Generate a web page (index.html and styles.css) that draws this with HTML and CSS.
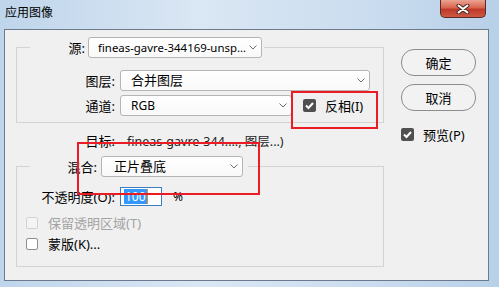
FILE: index.html
```html
<!DOCTYPE html>
<html lang="zh-CN">
  <head>
    <meta charset="UTF-8" />
    <title>应用图像</title>
    <link rel="stylesheet" href="styles.css">
  </head>
  <body>
    <div class="window">
      <div class="titlebar">
        <span class="title">应用图像</span>
        <div class="close-btn">
          <svg width="14" height="10" viewBox="0 0 14 10">
            <path d="M2.5 1.5 L11.5 8.5 M11.5 1.5 L2.5 8.5" stroke="#4a2a26" stroke-width="4" stroke-linecap="round" />
            <path d="M2.5 1.5 L11.5 8.5 M11.5 1.5 L2.5 8.5" stroke="#ffffff" stroke-width="2" stroke-linecap="round" />
          </svg>
        </div>
      </div>

      <div class="client">
        <div class="main">
          <!-- 源 -->
          <fieldset class="group source-group">
            <legend class="legend">
              <span class="src-label">源:</span>
              <div class="select source-select">
                <span class="select-text latin">fineas-gavre-344169-unsp...</span>
                <svg class="chevron" width="8" height="5" viewBox="0 0 8 5"><polyline points="0.5,0.5 4,4 7.5,0.5" fill="none" stroke="#6d6d6d" /></svg>
              </div>
            </legend>
            <div class="row">
              <span class="label">图层:</span>
              <div class="select layer-select">
                <span class="select-text">合并图层</span>
                <svg class="chevron" width="8" height="5" viewBox="0 0 8 5"><polyline points="0.5,0.5 4,4 7.5,0.5" fill="none" stroke="#6d6d6d" /></svg>
              </div>
            </div>
            <div class="row">
              <span class="label">通道:</span>
              <div class="select channel-select">
                <span class="select-text latin">RGB</span>
                <svg class="chevron" width="8" height="5" viewBox="0 0 8 5"><polyline points="0.5,0.5 4,4 7.5,0.5" fill="none" stroke="#6d6d6d" /></svg>
              </div>
              <div class="check invert">
                <span class="box checked">
                  <svg width="13" height="13" viewBox="0 0 13 13"><polyline points="3,6.5 5.5,9 10,4" fill="none" stroke="#ffffff" stroke-width="2" /></svg>
                </span>
                <span class="check-text">反相(I)</span>
              </div>
            </div>
          </fieldset>

          <div class="row target-row">
            <span class="label">目标:</span>
            <span class="target">fineas-gavre-344...., 图层...)</span>
          </div>

          <!-- 混合 -->
          <fieldset class="group blend-group">
            <legend class="legend blend-legend">
              <span class="blend-label">混合:</span>
              <div class="select blend-select">
                <span class="select-text">正片叠底</span>
                <svg class="chevron" width="8" height="5" viewBox="0 0 8 5"><polyline points="0.5,0.5 4,4 7.5,0.5" fill="none" stroke="#6d6d6d" /></svg>
              </div>
            </legend>
            <div class="row opacity-row">
              <span class="label opacity-label">不透明度(O):</span>
              <div class="num-input"><span class="sel latin">100</span><span class="caret"></span></div>
              <span class="unit latin">%</span>
            </div>
            <div class="check-list">
              <div class="check disabled">
                <span class="box"></span>
                <span class="check-text">保留透明区域(T)</span>
              </div>
              <div class="check">
                <span class="box"></span>
                <span class="check-text">蒙版(K)...</span>
              </div>
            </div>
          </fieldset>
        </div>

        <div class="side">
          <div class="btn">确定</div>
          <div class="btn">取消</div>
          <div class="check preview">
            <span class="box checked">
              <svg width="13" height="13" viewBox="0 0 13 13"><polyline points="3,6.5 5.5,9 10,4" fill="none" stroke="#ffffff" stroke-width="2" /></svg>
            </span>
            <span class="check-text">预览(P)</span>
          </div>
        </div>
      </div>

      <!-- 标注红框 -->
      <div class="mark mark-invert"></div>
      <div class="mark mark-blend"></div>
    </div>
  </body>
</html>
```

FILE: styles.css
```css
/* 全局 */
body {
  margin: 0;
  background-color: #3a3a3a;
  font-family: "Noto Sans", "Noto Sans CJK SC", sans-serif;
  font-size: 13px;
  color: #000000;
}

.latin {
  font-size: 12px;
}

/* 窗口外框 */
.window {
  position: relative;
  width: 499px;
  height: 287px;
  background: linear-gradient(to right, #bfd5eb, #dae7f4 40%, #cadcef 75%, #b8d0e8);
  display: flex;
  flex-direction: column;
}

.titlebar {
  height: 29px;
  display: flex;
  align-items: flex-start;
}

.title {
  margin: 5px 0 0 5px;
  font-size: 12px;
  line-height: 16px;
}

.close-btn {
  margin-left: auto;
  margin-right: 13px;
  width: 46px;
  height: 18px;
  box-sizing: border-box;
  border: 1px solid #5b2b25;
  border-top: none;
  border-radius: 0 0 5px 5px;
  background: linear-gradient(#eba393, #d9654e 45%, #c0392a 55%, #cc5a42);
  display: flex;
  align-items: center;
  justify-content: center;
}

.client {
  margin-left: 4px;
  width: 485px;
  height: 252px;
  box-sizing: border-box;
  border: 1px solid #6b7b8c;
  background-color: #f0f0f0;
  display: flex;
}

.main {
  padding-left: 11px;
  width: 368px;
  flex-shrink: 0;
}

/* 分组框 */
.group {
  margin: 0;
  width: 368px;
  box-sizing: border-box;
  min-width: 0;
  border: 1px solid #d3d3d3;
}

.source-group {
  margin-top: 7px;
  padding: 12px 13px 6px;
}

.blend-group {
  margin-top: 5px;
  padding: 10px 13px 12px 9px;
}

.legend {
  display: flex;
  align-items: center;
  height: 21px;
  padding: 0 2px 0 0;
}

.blend-legend {
  margin-left: 4px;
  padding-right: 5px;
}

.src-label {
  width: 55px;
  text-align: right;
  margin-right: 3px;
}

.blend-label {
  width: 67px;
  text-align: right;
  margin-right: 4px;
}

/* 下拉框 */
.select {
  height: 21px;
  box-sizing: border-box;
  border: 1px solid #b5b5b5;
  border-radius: 3px;
  background: linear-gradient(#ffffff, #f9f9f9);
  display: flex;
  align-items: center;
  padding: 0 4px 0 9px;
}

.select-text {
  flex: 1;
  min-width: 0;
  overflow: hidden;
  line-height: 19px;
  white-space: nowrap;
}

.chevron {
  flex-shrink: 0;
}

.source-select {
  width: 174px;
}

.source-select .select-text {
  font-size: 11.4px;
}

.layer-select {
  width: 256px;
  padding-left: 10px;
}

.channel-select {
  width: 172px;
  padding-left: 10px;
}

.blend-select {
  width: 142px;
  padding-left: 12px;
}

/* 行 */
.row {
  display: flex;
  align-items: center;
  height: 21px;
}

.row + .row {
  margin-top: 4px;
}

.label {
  width: 85px;
  flex-shrink: 0;
  text-align: right;
  margin-right: 5px;
  white-space: nowrap;
}

.target-row {
  margin-top: 7px;
  padding-left: 14px;
}

.target {
  margin-left: 7px;
  color: #1e1e1e;
  font-size: 12.5px;
  white-space: nowrap;
}

/* 不透明度 */
.opacity-row {
  height: 19px;
}

.opacity-label {
  width: 89px;
}

.num-input {
  width: 42px;
  height: 19px;
  box-sizing: border-box;
  border: 1px solid #3c7fc1;
  background-color: #ffffff;
  display: flex;
  align-items: center;
  padding-left: 3px;
}

.num-input .sel {
  background-color: #3399ff;
  color: #ffffff;
  line-height: 15px;
  padding: 0 1px;
}

.caret {
  width: 1px;
  height: 15px;
  background-color: #f08a1c;
}

.unit {
  margin-left: 11px;
}

/* 复选框 */
.check-list {
  margin-top: 6px;
}

.check {
  display: flex;
  align-items: center;
  height: 21px;
}

.box {
  width: 12px;
  height: 12px;
  box-sizing: border-box;
  border: 1px solid #8e8f8f;
  border-radius: 2px;
  background-color: #ffffff;
  flex-shrink: 0;
  display: flex;
}

.box.checked {
  width: 13px;
  height: 13px;
  border: none;
  background-color: #505050;
}

.check-text {
  margin-left: 10px;
  white-space: nowrap;
}

.disabled .box {
  border-color: #d2d2d2;
  background-color: #f4f4f4;
}

.disabled .check-text {
  color: #a3a3a3;
}

.invert {
  margin-left: 11px;
}

.invert .check-text,
.preview .check-text {
  margin-left: 9px;
}

/* 右侧按钮 */
.side {
  margin-left: 17px;
  padding-top: 19px;
  display: flex;
  flex-direction: column;
}

.btn {
  width: 75px;
  height: 27px;
  box-sizing: border-box;
  border: 1px solid #8c8c8c;
  border-radius: 13px;
  background-color: #f2f2f2;
  display: flex;
  align-items: center;
  justify-content: center;
}

.btn + .btn {
  margin-top: 8px;
}

.preview {
  margin-top: 13px;
}

/* 标注红框 */
.mark {
  position: absolute;
  box-sizing: border-box;
  border: 2px solid #ec1c24;
}

.mark-invert {
  left: 291px;
  top: 91px;
  width: 87px;
  height: 38px;
}

.mark-blend {
  left: 77px;
  top: 142px;
  width: 183px;
  height: 53px;
}
```
